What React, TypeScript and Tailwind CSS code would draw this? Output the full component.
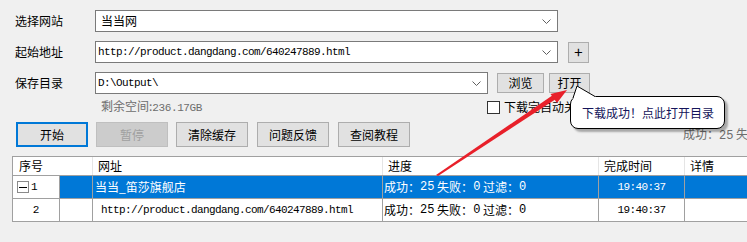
import React from 'react'

const cjk = "font-['Noto_Sans_CJK_SC',sans-serif]"
const mono = "font-['Liberation_Mono','Noto_Sans_CJK_SC',monospace]"

function Chevron() {
  return (
    <svg width="9" height="5" viewBox="0 0 9 5" className="shrink-0">
      <path d="M0.5 0.5 L4.5 4.5 L8.5 0.5" fill="none" stroke="#606060" strokeWidth="1" />
    </svg>
  )
}

function Combo({ w, children }: { w: string; children?: React.ReactNode }) {
  return (
    <div className={`${w} shrink-0 h-[22px] flex items-center justify-between bg-white border border-[#7a7a7a] pl-[2px] pr-[6px]`}>
      <div className="flex items-center whitespace-nowrap">{children}</div>
      <Chevron />
    </div>
  )
}

function Btn({ w, h = 'h-[20px]', children, cls = '' }: { w: string; h?: string; children: React.ReactNode; cls?: string }) {
  return (
    <div className={`${w} ${h} shrink-0 flex items-center justify-center bg-[#e1e1e1] border border-[#adadad] text-[12px] leading-[16px] text-black ${cjk} ${cls}`}>
      {children}
    </div>
  )
}

const url = 'http://product.dangdang.com/640247889.html'

function Progress() {
  return (
    <>
      成功：<span className={mono}>25</span>&nbsp;失败：<span className={mono}>0</span>&nbsp;过滤：<span className={mono}>0</span>
    </>
  )
}

export default function App() {
  return (
    <div className="relative w-[747px] h-[242px] overflow-hidden bg-[#f0f0f0] text-black">
      <div className="flex flex-col pt-[10px]">
        {/* site */}
        <div className="flex items-center pl-[15px]">
          <div className={`w-[80px] shrink-0 text-[12px] leading-[16px] ${cjk}`}>选择网站</div>
          <Combo w="w-[463px]">
            <span className={`pl-[3px] text-[12px] leading-[16px] ${cjk}`}>当当网</span>
          </Combo>
        </div>

        {/* start url */}
        <div className="flex items-center pl-[15px] mt-[9px]">
          <div className={`w-[80px] shrink-0 text-[12px] leading-[16px] ${cjk}`}>起始地址</div>
          <Combo w="w-[463px]">
            <span className={`text-[11px] tracking-[-0.6px] leading-[16px] ${mono}`}>{url}</span>
          </Combo>
          <Btn w="w-[21px] ml-[10px]" h="h-[21px]" cls="text-[15px]">+</Btn>
        </div>

        {/* save dir */}
        <div className="flex items-center pl-[15px] mt-[9px]">
          <div className={`w-[80px] shrink-0 text-[12px] leading-[16px] ${cjk}`}>保存目录</div>
          <Combo w="w-[393px]">
            <span className={`text-[11px] tracking-[-0.6px] leading-[16px] ${mono}`}>D:\Output\</span>
          </Combo>
          <Btn w="w-[47px] ml-[9px]">浏览</Btn>
          <Btn w="w-[41px] ml-[5px]">打开</Btn>
        </div>

        {/* free space + checkbox */}
        <div className="flex items-center h-[14px] mt-[6px] whitespace-nowrap">
          <div className={`w-[386px] shrink-0 pl-[101px] text-[12px] leading-[16px] text-[#6d6d6d] ${cjk}`}>
            剩余空间:<span className={`text-[11px] tracking-[-0.4px] ${mono}`}>236.17GB</span>
          </div>
          <div className="w-[13px] h-[13px] shrink-0 bg-white border border-[#333] ml-[101px]" />
          <span className={`ml-[4px] text-[12px] leading-[16px] ${cjk}`}>下载完自动关闭</span>
        </div>

        {/* action buttons */}
        <div className="flex items-center pl-[16px] mt-[8px]">
          <div className={`w-[72px] h-[25px] shrink-0 flex items-center justify-center bg-[#e1e1e1] border-2 border-[#0078d7] text-[12px] leading-[16px] ${cjk}`}>开始</div>
          <div className={`ml-[8px] w-[72px] h-[25px] shrink-0 flex items-center justify-center bg-[#cccccc] border border-[#bfbfbf] text-[12px] leading-[16px] text-[#a0a0a0] ${cjk}`}>暂停</div>
          <Btn w="w-[72px] ml-[8px]" h="h-[25px]">清除缓存</Btn>
          <Btn w="w-[72px] ml-[9px]" h="h-[25px]">问题反馈</Btn>
          <Btn w="w-[72px] ml-[9px]" h="h-[25px]">查阅教程</Btn>
          <div className={`ml-[273px] shrink-0 whitespace-nowrap text-[12px] leading-[16px] text-[#6d6d6d] ${cjk}`}>
            <Progress />
          </div>
        </div>

        {/* table */}
        <div className="ml-[12px] mt-[9px] w-[760px] border-t border-l border-[#a0a0a0] bg-white">
          <div className={`flex h-[19px] text-[12px] leading-[16px] border-b border-[#a0a0a0] ${cjk}`}>
            <div className="w-[80px] flex items-center pl-[6px] border-r border-[#e5e5e5]">序号</div>
            <div className="w-[290px] flex items-center pl-[5px] border-r border-[#e5e5e5]">网址</div>
            <div className="w-[216px] flex items-center pl-[5px] border-r border-[#e5e5e5]">进度</div>
            <div className="w-[86px] flex items-center pl-[5px] border-r border-[#e5e5e5]">完成时间</div>
            <div className="flex-1 flex items-center pl-[5px]">详情</div>
          </div>

          <div className="flex h-[23px] border-b border-[#a0a0a0] text-[12px] leading-[16px]">
            <div className="w-[47px] flex items-center pl-[4px] border-r border-[#a0a0a0] bg-white">
              <div className="w-[12px] h-[12px] border border-[#8a8a8a] flex items-center justify-center">
                <div className="w-[8px] h-[1px] bg-black" />
              </div>
              <span className={`ml-[2px] ${mono} text-[11px]`}>1</span>
            </div>
            <div className="flex-1 flex bg-[#0078d7] text-white">
              <div className="w-[33px] border-r border-[#a0a0a0]" />
              <div className={`w-[290px] flex items-center pl-[2px] border-r border-[#a0a0a0] ${cjk}`}>当当_笛莎旗舰店</div>
              <div className={`w-[216px] flex items-center pl-[1px] border-r border-[#a0a0a0] whitespace-nowrap ${cjk}`}>
                <Progress />
              </div>
              <div className="w-[86px] flex items-center justify-center border-r border-[#a0a0a0]">
                <span className={`text-[11px] tracking-[-0.6px] ${mono}`}>19:40:37</span>
              </div>
              <div className="flex-1" />
            </div>
          </div>

          <div className="flex h-[23px] border-b border-[#a0a0a0] text-[12px] leading-[16px]">
            <div className="w-[47px] flex items-center justify-center border-r border-[#a0a0a0]">
              <span className={`${mono} text-[11px]`}>2</span>
            </div>
            <div className="w-[33px] border-r border-[#a0a0a0]" />
            <div className="w-[290px] flex items-center pl-[8px] border-r border-[#a0a0a0]">
              <span className={`text-[11px] tracking-[-0.6px] ${mono}`}>{url}</span>
            </div>
            <div className={`w-[216px] flex items-center pl-[1px] border-r border-[#a0a0a0] whitespace-nowrap ${cjk}`}>
              <Progress />
            </div>
            <div className="w-[86px] flex items-center justify-center border-r border-[#a0a0a0]">
              <span className={`text-[11px] tracking-[-0.6px] ${mono}`}>19:40:37</span>
            </div>
            <div className="flex-1" />
          </div>
        </div>
      </div>

      {/* balloon tooltip */}
      <div className="absolute left-[570px] top-[96px] w-[155px] h-[33px] rounded-[8px] border border-black bg-white shadow-[3px_3px_2px_rgba(0,0,0,0.3)] flex items-center pl-[11px]">
        <span className={`text-[12px] leading-[16px] text-[#14145a] whitespace-nowrap ${cjk}`}>下载成功！点此打开目录</span>
      </div>

      {/* arrow + balloon tail */}
      <svg className="absolute left-0 top-0 pointer-events-none" width="747" height="242" viewBox="0 0 747 242">
        <polygon points="436,175 438,176 556,99 553,95" fill="#e8202a" />
        <polygon points="567,90 550.5,94 557,103" fill="#e8202a" />
        <polygon points="573,100 577,86 596,97" fill="#fff" />
        <polyline points="573,98 577,86 595,96.5" fill="none" stroke="#000" strokeWidth="1" />
      </svg>
    </div>
  )
}
